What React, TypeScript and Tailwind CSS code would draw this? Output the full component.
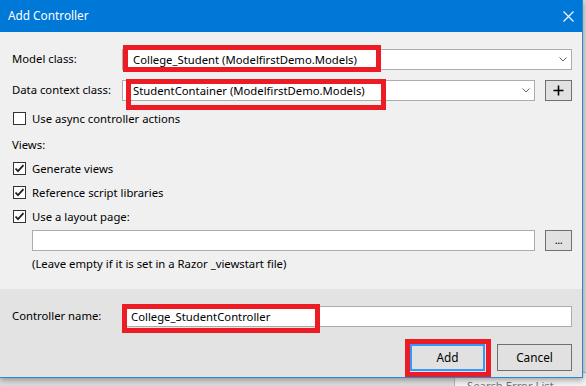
import React from 'react'

const font = { fontFamily: '"Noto Sans", "Open Sans", sans-serif' }

function Chevron() {
  return (
    <svg width="8" height="5" viewBox="0 0 8 5" className="text-[#606060]">
      <path d="M0.5 0.5 L4 4 L7.5 0.5" fill="none" stroke="currentColor" strokeWidth="1" />
    </svg>
  )
}

function Check({ checked }: { checked: boolean }) {
  return (
    <span className="w-[13px] h-[13px] border border-[#333333] bg-white flex items-center justify-center shrink-0">
      {checked && (
        <svg width="11" height="11" viewBox="0 0 11 11">
          <path d="M1.5 5.5 L4 8.2 L9.5 2.2" fill="none" stroke="#222222" strokeWidth="1.8" />
        </svg>
      )}
    </span>
  )
}

function RedBox({ className }: { className: string }) {
  return <div className={`absolute border-[5px] border-[#ed1c24] pointer-events-none ${className}`} />
}

function Combo({ text, className }: { text: string; className: string }) {
  return (
    <div className={`h-[21px] bg-white border border-[#acacac] flex items-center justify-between pl-[10px] pr-[4px] ${className}`}>
      <span className="text-[11.3px] text-black leading-none">{text}</span>
      <Chevron />
    </div>
  )
}

function SmallButton({ children }: { children: React.ReactNode }) {
  return (
    <div className="w-[27px] h-[21px] bg-[#e1e1e1] border border-[#707070] flex items-center justify-center text-black">
      {children}
    </div>
  )
}

function CheckRow({ checked, label, className }: { checked: boolean; label: string; className: string }) {
  return (
    <div className={`flex items-center gap-[6px] pl-[1px] ${className}`}>
      <Check checked={checked} />
      <span className="text-[11.3px] leading-none text-black">{label}</span>
    </div>
  )
}

export default function App() {
  return (
    <div className="w-[586px] h-[386px] bg-[#dcdcdc] relative overflow-hidden" style={font}>
      {/* window behind, partially visible */}
      <div className="absolute left-[454px] top-[372px] w-[140px] h-[30px] border border-[#b8b8b8] bg-[#f2f2f2] pl-[12px] pt-[5px] text-[11.3px] text-[#777777]">
        Search Error List
      </div>

      <div className="relative w-[583px] h-[378px] flex flex-col border-r border-b border-[#2b86d4] shadow-[0_2px_6px_rgba(0,0,0,0.35)]">
        {/* title bar */}
        <div className="h-[32px] bg-[#0078d7] flex items-center justify-between pl-[8px] pr-[8px] shrink-0">
          <span className="text-[11.8px] text-white">Add Controller</span>
          <svg width="11" height="11" viewBox="0 0 11 11">
            <path d="M0.5 0.5 L10.5 10.5 M10.5 0.5 L0.5 10.5" stroke="white" strokeWidth="1.1" />
          </svg>
        </div>

        {/* main body */}
        <div className="bg-[#f0f0f0] h-[257px] pl-[12px] pr-[10px] pt-[17px] flex flex-col shrink-0">
          <div className="flex items-center relative">
            <span className="w-[110px] text-[11.3px] text-black">Model class:</span>
            <Combo text="College_Student (ModelfirstDemo.Models)" className="flex-1" />
            <RedBox className="left-[111px] top-[-4px] w-[258px] h-[27px]" />
          </div>

          <div className="flex items-center mt-[10px] relative">
            <span className="w-[110px] text-[11.3px] text-black">Data context class:</span>
            <Combo text="StudentContainer (ModelfirstDemo.Models)" className="flex-1" />
            <div className="ml-[10px]">
              <SmallButton>
                <svg width="11" height="11" viewBox="0 0 11 11">
                  <path d="M5.5 0.5 V10.5 M0.5 5.5 H10.5" stroke="black" strokeWidth="1.6" />
                </svg>
              </SmallButton>
            </div>
            <RedBox className="left-[114px] top-[-1px] w-[260px] h-[31px]" />
          </div>

          <CheckRow checked={false} label="Use async controller actions" className="mt-[11px]" />

          <div className="text-[11.3px] leading-none text-black mt-[14px]">Views:</div>

          <CheckRow checked label="Generate views" className="mt-[12px]" />
          <CheckRow checked label="Reference script libraries" className="mt-[11px]" />
          <CheckRow checked label="Use a layout page:" className="mt-[11px]" />

          <div className="flex items-center mt-[7px] pl-[20px]">
            <div className="flex-1 h-[21px] bg-white border border-[#acacac]" />
            <div className="ml-[10px]">
              <SmallButton>
                <span className="text-[11px] leading-none tracking-[-0.5px] -mt-[3px]">...</span>
              </SmallButton>
            </div>
          </div>

          <div className="pl-[20px] mt-[7px] text-[11.3px] leading-none text-black">
            (Leave empty if it is set in a Razor _viewstart file)
          </div>
        </div>

        {/* footer */}
        <div className="bg-[#e3e3e3] flex-1 pl-[12px] pr-[10px] pt-[17px] flex flex-col">
          <div className="flex items-center relative">
            <span className="w-[113px] text-[11.3px] text-black">Controller name:</span>
            <div className="flex-1 h-[21px] bg-white border border-[#acacac] flex items-center pl-[5px]">
              <span className="text-[11.3px] leading-none text-black">College_StudentController</span>
            </div>
            <RedBox className="left-[110px] top-[-2px] w-[198px] h-[29px]" />
          </div>

          <div className="flex justify-end gap-[12px] mt-[17px] relative">
            <div className="relative">
              <div className="w-[75px] h-[27px] bg-[#e1e1e1] border-2 border-[#3399ff] flex items-center justify-center text-[11.8px] text-black">
                Add
              </div>
              <RedBox className="left-[-5px] top-[-5px] w-[86px] h-[38px]" />
            </div>
            <div className="w-[75px] h-[27px] bg-[#e1e1e1] border border-[#707070] flex items-center justify-center text-[11.8px] text-black">
              Cancel
            </div>
          </div>
        </div>
      </div>
    </div>
  )
}
